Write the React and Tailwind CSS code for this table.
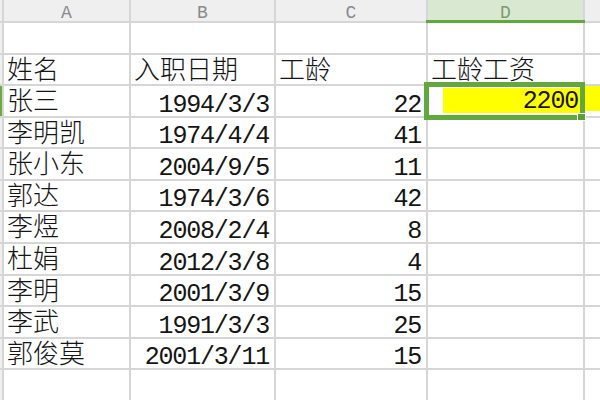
import React from 'react'

// Sheet data: name, hire date, years, wage (only first row has a wage)
const ROWS = [
  ['张三', '1994/3/3', '22', '2200'],
  ['李明凯', '1974/4/4', '41'],
  ['张小东', '2004/9/5', '11'],
  ['郭达', '1974/3/6', '42'],
  ['李煜', '2008/2/4', '8'],
  ['杜娟', '2012/3/8', '4'],
  ['李明', '2001/3/9', '15'],
  ['李武', '1991/3/3', '25'],
  ['郭俊莫', '2001/3/11', '15'],
]

const cjk = { fontFamily: '"Noto Sans CJK SC", sans-serif' }
const mono = { fontFamily: '"Liberation Mono", monospace' }

function Txt({ children }) {
  return (
    <span style={cjk} className="text-[26px] leading-[26px] font-light text-[#151515] -translate-y-[2px]">
      {children}
    </span>
  )
}

function Num({ children }) {
  return (
    <span style={mono} className="text-[25px] leading-[25px] tracking-[-1.2px] text-[#151515] translate-y-[2px]">
      {children}
    </span>
  )
}

export default function App() {
  return (
    <div className="relative w-[600px] h-[400px] overflow-hidden bg-white">
      <div className="grid grid-cols-[2px_125px_143px_150px_155px_1fr] grid-rows-[21px_30px_29px_30px_29px_30px_29px_30px_30px_29px_30px_29px_30px] gap-[2px] bg-[#d6d6d6] h-[402px]">
        {/* column headers */}
        <div className="bg-[#efefef]" />
        {['A', 'B', 'C'].map((l) => (
          <div key={l} className="bg-[#efefef] flex items-center justify-center">
            <span style={mono} className="text-[18px] leading-none text-[#8a8a8a] translate-y-[2px]">{l}</span>
          </div>
        ))}
        <div className="bg-[#d9e9d1] flex items-center justify-center">
          <span style={mono} className="text-[18px] leading-none text-[#7f9a72] translate-y-[2px]">D</span>
        </div>
        <div className="bg-[#efefef]" />

        {/* empty first row */}
        <div className="bg-[#efefef]" />
        <div className="bg-white" />
        <div className="bg-white" />
        <div className="bg-white" />
        <div className="bg-white" />
        <div className="bg-white" />

        {/* titles */}
        <div className="bg-[#efefef]" />
        <div className="bg-white flex items-center pl-[3px]"><Txt>姓名</Txt></div>
        <div className="bg-white flex items-center pl-[3px]"><Txt>入职日期</Txt></div>
        <div className="bg-white flex items-center pl-[3px]"><Txt>工龄</Txt></div>
        <div className="bg-white flex items-center pl-[3px]"><Txt>工龄工资</Txt></div>
        <div className="bg-white" />

        {ROWS.map((r, i) => (
          <React.Fragment key={r[0] + i}>
            <div className={i === 0 ? 'bg-[#6aab42]' : 'bg-[#efefef]'} />
            <div className="bg-white flex items-center pl-[3px]"><Txt>{r[0]}</Txt></div>
            <div className="bg-white flex items-end justify-end pr-[5px]"><Num>{r[1]}</Num></div>
            <div className="bg-white flex items-end justify-end pr-[5px]"><Num>{r[2]}</Num></div>
            {i === 0 ? (
              <div className="bg-white flex pl-[15px] pt-[2px] pb-[3px]">
                <div className="flex-1 bg-[#ffff00] flex items-end justify-end pr-[5px]">
                  <span style={mono} className="text-[25px] leading-[25px] tracking-[-1.2px] text-[#151515] translate-y-[1px]">
                    {r[3]}
                  </span>
                </div>
              </div>
            ) : (
              <div className="bg-white" />
            )}
            {i === 0 ? (
              <div className="bg-white pb-[5px]"><div className="h-full bg-[#ffff00]" /></div>
            ) : (
              <div className="bg-white" />
            )}
          </React.Fragment>
        ))}

        {/* trailing empty row */}
        <div className="bg-[#efefef]" />
        <div className="bg-white" />
        <div className="bg-white" />
        <div className="bg-white" />
        <div className="bg-white" />
        <div className="bg-white" />
      </div>

      {/* active column underline */}
      <div className="absolute left-[426px] top-[20px] w-[159px] h-[3px] bg-[#62a83e]" />

      {/* selected cell frame + fill handle */}
      <div className="absolute left-[424px] top-[82px] w-[161px] h-[38px] border-[5px] border-[#62a83e]" />
      <div className="absolute left-[577px] top-[113px] w-[9px] h-[8px] bg-[#5a9e3a] border border-white" />
    </div>
  )
}
